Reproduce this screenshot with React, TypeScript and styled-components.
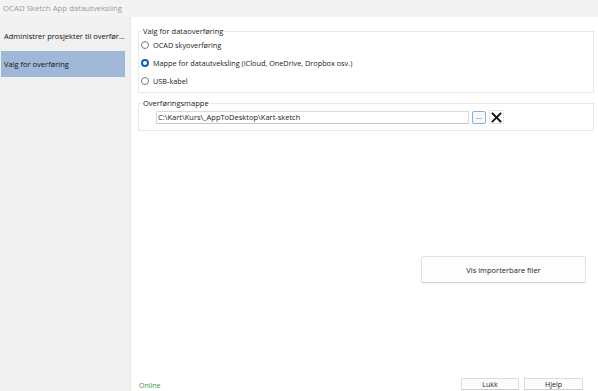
import React from "react";
import styled, { createGlobalStyle } from "styled-components";

const GlobalStyle = createGlobalStyle`
  html, body {
    margin: 0;
    padding: 0;
    background: #ffffff;
  }
  body {
    font-family: "Open Sans", "Noto Sans", "Liberation Sans", sans-serif;
  }
`;

const options = [
  { label: "OCAD skyoverføring", checked: false },
  { label: "Mappe for datautveksling (iCloud, OneDrive, Dropbox osv.)", checked: true },
  { label: "USB-kabel", checked: false },
];

export default () => {
  return (
    <Window>
      <GlobalStyle />
      <TitleBar>OCAD Sketch App datautveksling</TitleBar>
      <Body>
        <Sidebar>
          <NavItem>Administrer prosjekter til overfør...</NavItem>
          <NavItem selected>Valg for overføring</NavItem>
        </Sidebar>
        <Main>
          <GroupBox>
            <Legend>Valg for dataoverføring</Legend>
            {options.map((opt) => (
              <RadioRow key={opt.label}>
                <Radio checked={opt.checked} />
                <span>{opt.label}</span>
              </RadioRow>
            ))}
          </GroupBox>
          <FolderGroup>
            <Legend>Overføringsmappe</Legend>
            <FolderRow>
              <PathInput>C:\Kart\Kurs\_AppToDesktop\Kart-sketch</PathInput>
              <BrowseButton>...</BrowseButton>
              <ClearButton>
                <svg width="11" height="11" viewBox="0 0 11 11">
                  <path d="M1.5 1.5 L9.5 9.5 M9.5 1.5 L1.5 9.5" stroke="#111" strokeWidth="1.8" strokeLinecap="square" />
                </svg>
              </ClearButton>
            </FolderRow>
          </FolderGroup>
          <ActionRow>
            <BigButton>Vis importerbare filer</BigButton>
          </ActionRow>
          <Footer>
            <Status>Online</Status>
            <FooterButtons>
              <SmallButton width={58}>Lukk</SmallButton>
              <SmallButton width={59}>Hjelp</SmallButton>
            </FooterButtons>
          </Footer>
        </Main>
      </Body>
    </Window>
  );
};

const Window = styled.div`
  width: 598px;
  height: 391px;
  display: flex;
  flex-direction: column;
  overflow: hidden;
  background: #ffffff;
  color: #1a1a1a;
  font-size: 7.5px;
`;

const TitleBar = styled.div`
  height: 17px;
  flex-shrink: 0;
  background: #f3f3f3;
  color: #9a9a9a;
  font-size: 7.8px;
  line-height: 17px;
  padding-left: 3px;
`;

const Body = styled.div`
  flex: 1;
  display: flex;
  min-height: 0;
`;

const Sidebar = styled.div`
  width: 131px;
  flex-shrink: 0;
  background: #f0f0f0;
  border-right: 1px solid #e6e6e6;
  padding: 6px 0 0 1px;
  box-sizing: border-box;
  display: flex;
  flex-direction: column;
  gap: 2px;
`;

const NavItem = styled.div<{ selected?: boolean }>`
  width: 124px;
  height: 26px;
  line-height: 26px;
  padding-left: 3px;
  box-sizing: border-box;
  white-space: nowrap;
  overflow: hidden;
  font-size: 7.5px;
  color: #111;
  background: ${(p) => (p.selected ? "#9fb8d8" : "transparent")};
`;

const Main = styled.div`
  flex: 1;
  display: flex;
  flex-direction: column;
  padding: 9px 4px 1px 7px;
  min-width: 0;
`;

const GroupBox = styled.fieldset`
  margin: 0;
  padding: 0 0 2px 2px;
  border: 1px solid #e8e8e8;
  min-width: 0;
`;

const FolderGroup = styled(GroupBox)`
  margin-top: 5px;
  padding: 0 0 6px 2px;
`;

const Legend = styled.legend`
  padding: 0 1px;
  margin-left: 1px;
  font-size: 7.5px;
  line-height: 10px;
  color: #222;
`;

const RadioRow = styled.div`
  height: 18px;
  display: flex;
  align-items: center;
  gap: 4px;
  font-size: 7.3px;
  color: #1a1a1a;
`;

const Radio = styled.span<{ checked?: boolean }>`
  width: 8px;
  height: 8px;
  box-sizing: border-box;
  border-radius: 50%;
  background: #ffffff;
  border: ${(p) => (p.checked ? "2.5px solid #0a5fc0" : "1px solid #7a7a7a")};
`;

const FolderRow = styled.div`
  margin: 2px 0 0 15px;
  display: flex;
  align-items: center;
  gap: 3px;
`;

const PathInput = styled.div`
  width: 313px;
  height: 13px;
  box-sizing: border-box;
  border: 1px solid #dadada;
  border-bottom-color: #c4c4c4;
  padding-left: 1px;
  line-height: 11px;
  font-size: 7.5px;
  color: #1a1a1a;
  white-space: nowrap;
`;

const BrowseButton = styled.div`
  width: 14px;
  height: 13px;
  box-sizing: border-box;
  border: 1px solid #7fb0e6;
  border-radius: 2px;
  background: #f7f9fc;
  font-size: 7px;
  line-height: 9px;
  text-align: center;
  color: #333;
`;

const ClearButton = styled.div`
  width: 15px;
  height: 14px;
  box-sizing: border-box;
  border: 1px solid #e4e4e4;
  border-radius: 2px;
  display: flex;
  align-items: center;
  justify-content: center;
`;

const ActionRow = styled.div`
  margin-top: 125px;
  display: flex;
  justify-content: flex-end;
  padding-right: 8px;
`;

const BigButton = styled.div`
  width: 165px;
  height: 27px;
  box-sizing: border-box;
  border: 1px solid #e2e2e2;
  border-bottom-color: #d2d2d2;
  border-radius: 2px;
  box-shadow: 0 1px 1px rgba(0, 0, 0, 0.06);
  background: #fdfdfd;
  display: flex;
  align-items: center;
  justify-content: center;
  font-size: 7.5px;
  color: #222;
`;

const Footer = styled.div`
  margin-top: auto;
  display: flex;
  align-items: flex-end;
  justify-content: space-between;
  padding-right: 11px;
`;

const Status = styled.div`
  color: #3a9a3a;
  font-size: 7px;
  line-height: 10px;
  padding-left: 1px;
  margin-bottom: -1px;
`;

const FooterButtons = styled.div`
  display: flex;
  gap: 5px;
`;

const SmallButton = styled.div<{ width: number }>`
  width: ${(p) => p.width}px;
  height: 12px;
  box-sizing: border-box;
  border: 1px solid #dcdcdc;
  border-bottom-color: #cfcfcf;
  border-radius: 1px;
  background: #fcfcfc;
  display: flex;
  align-items: center;
  justify-content: center;
  font-size: 7px;
  color: #222;
`;
